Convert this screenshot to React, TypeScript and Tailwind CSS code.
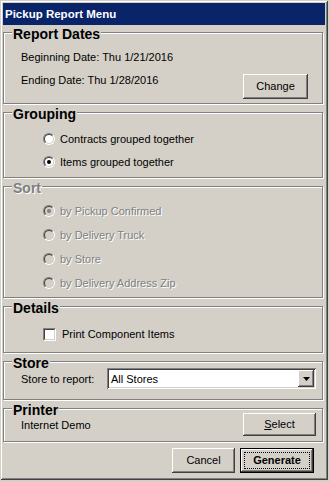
import React from "react";

const raised =
  "shadow-[inset_-1px_-1px_0_#404040,inset_1px_1px_0_#fff,inset_-2px_-2px_0_#808080,inset_2px_2px_0_#d4d0c8]";
const sunken =
  "shadow-[inset_1px_1px_0_#808080,inset_-1px_-1px_0_#fff,inset_2px_2px_0_#404040,inset_-2px_-2px_0_#d4d0c8]";
const dim = "text-[#808080] [text-shadow:1px_1px_0_#fff]";

const Group: React.FC<{
  title: string;
  disabled?: boolean;
  first?: boolean;
  children: React.ReactNode;
}> = ({ title, disabled, first, children }) => (
  <div
    className={`${first ? "mt-[7px]" : "mt-[8px]"} flex w-[320px] flex-col border border-[#808080] shadow-[inset_1px_1px_0_#fff,1px_1px_0_#fff]`}
  >
    <div
      className={`-my-[8px] ml-[8px] self-start bg-[#d4d0c8] px-[1px] pt-[2px] text-[14px] font-bold leading-[14px] ${disabled ? dim : ""}`}
    >
      {title}
    </div>
    {children}
  </div>
);

const Radio: React.FC<{ label: string; checked?: boolean; disabled?: boolean }> = ({
  label,
  checked,
  disabled,
}) => (
  <div className="flex h-[14px] items-center gap-[5px]">
    <span className="flex h-[12px] w-[12px] rounded-full border border-t-[#808080] border-l-[#808080] border-b-white border-r-white">
      <span
        className={`flex flex-1 items-center justify-center rounded-full border border-t-[#404040] border-l-[#404040] border-b-[#d4d0c8] border-r-[#d4d0c8] ${disabled ? "bg-[#d4d0c8]" : "bg-white"}`}
      >
        {checked && (
          <span className={`h-[4px] w-[4px] rounded-full ${disabled ? "bg-[#808080]" : "bg-black"}`} />
        )}
      </span>
    </span>
    <span className={`leading-[14px] ${disabled ? dim : ""}`}>{label}</span>
  </div>
);

const Button: React.FC<{ w: string; h?: string; children: React.ReactNode; extra?: string }> = ({
  w,
  h = "h-[25px]",
  children,
  extra = "",
}) => (
  <div className={`flex items-center justify-center ${w} ${h} ${raised} ${extra}`}>{children}</div>
);

export default function App() {
  return (
    <div
      className="h-[482px] w-[330px] bg-[#d4d0c8] text-[11px] text-black"
      style={{ fontFamily: '"Liberation Sans", Arial, sans-serif' }}
    >
      <div className="flex h-[480px] w-[328px] flex-col p-[3px] shadow-[inset_1px_1px_0_#d4d0c8,inset_-1px_-1px_0_#404040,inset_2px_2px_0_#fff,inset_-2px_-2px_0_#808080]">
        <div className="flex h-[22px] items-center bg-[#0a246a] pl-[2px] pt-[2px] text-[11.5px] font-bold text-white">
          Pickup Report Menu
        </div>

        <Group title="Report Dates" first>
          <div className="flex flex-col pb-[4px] pl-[17px] pr-[14px] pt-[17px]">
            <div className="leading-[14px]">Beginning Date: Thu 1/21/2016</div>
            <div className="mt-[9px] flex items-start justify-between">
              <span className="leading-[14px]">Ending Date: Thu 1/28/2016</span>
              <Button w="w-[65px]" extra="mt-[1px]">
                Change
              </Button>
            </div>
          </div>
        </Group>

        <Group title="Grouping">
          <div className="flex flex-col gap-[9px] pb-[8px] pl-[39px] pt-[19px]">
            <Radio label="Contracts grouped together" />
            <Radio label="Items grouped together" checked />
          </div>
        </Group>

        <Group title="Sort" disabled>
          <div className="flex flex-col gap-[10px] pb-[7px] pl-[39px] pt-[17px]">
            <Radio label="by Pickup Confirmed" checked disabled />
            <Radio label="by Delivery Truck" disabled />
            <Radio label="by Store" disabled />
            <Radio label="by Delivery Address Zip" disabled />
          </div>
        </Group>

        <Group title="Details">
          <div className="flex flex-col pb-[11px] pl-[39px] pt-[20px]">
            <div className="flex h-[14px] items-center gap-[6px]">
              <span className="flex h-[13px] w-[13px] border border-t-[#808080] border-l-[#808080] border-b-white border-r-white">
                <span className="flex-1 border border-t-[#404040] border-l-[#404040] border-b-[#d4d0c8] border-r-[#d4d0c8] bg-white" />
              </span>
              <span className="leading-[14px]">Print Component Items</span>
            </div>
          </div>
        </Group>

        <Group title="Store">
          <div className="flex items-center justify-between pb-[10px] pl-[17px] pr-[6px] pt-[6px]">
            <span className="leading-[14px]">Store to report:</span>
            <div className={`flex h-[21px] w-[209px] items-center bg-white p-[2px] ${sunken}`}>
              <span className="flex-1 pl-[2px] leading-[14px]">All Stores</span>
              <span className={`flex h-[17px] w-[16px] items-center justify-center bg-[#d4d0c8] ${raised}`}>
                <svg width="7" height="4" viewBox="0 0 7 4">
                  <polygon points="0,0 7,0 3.5,4" fill="#000" />
                </svg>
              </span>
            </div>
          </div>
        </Group>

        <Group title="Printer">
          <div className="flex items-center justify-between pb-[5px] pl-[17px] pr-[6px] pt-[4px]">
            <span className="leading-[14px]">Internet Demo</span>
            <Button w="w-[73px]" h="h-[23px]">
              <span>
                <span className="underline">S</span>elect
              </span>
            </Button>
          </div>
        </Group>

        <div className="mt-[6px] flex justify-end gap-[5px] pr-[11px]">
          <Button w="w-[63px]">Cancel</Button>
          <div className={`flex h-[25px] w-[74px] border border-black p-[3px] ${raised}`}>
            <span className="flex flex-1 items-center justify-center border border-dotted border-black font-bold">
              Generate
            </span>
          </div>
        </div>
      </div>
    </div>
  );
}
